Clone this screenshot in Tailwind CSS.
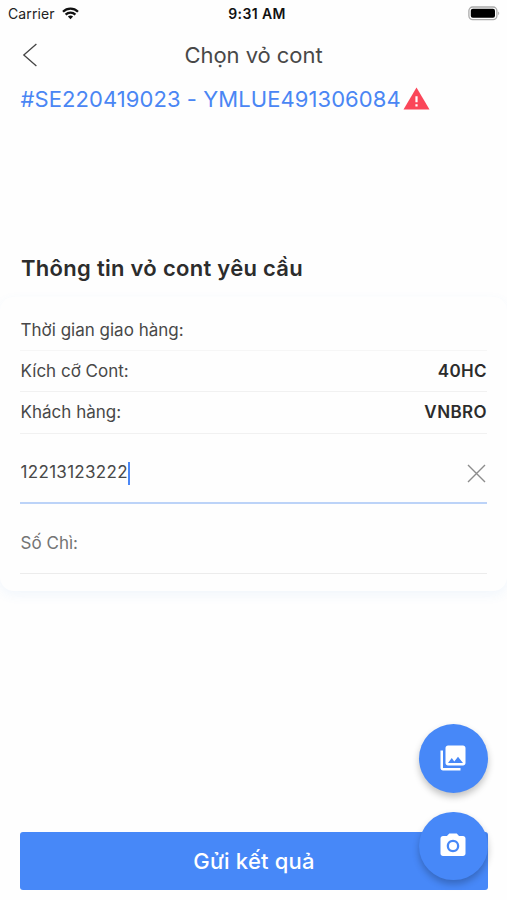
<!DOCTYPE html>
<html lang="vi">
<head>
<meta charset="utf-8">
<meta name="viewport" content="width=device-width, initial-scale=1">
<title>Chọn vỏ cont</title>
<script src="https://cdn.jsdelivr.net/npm/@tailwindcss/browser@4"></script>
</head>
<body class="bg-[#fefefe]">
<div class="relative flex h-[900px] w-[507px] flex-col overflow-hidden bg-[#fefefe] font-['Inter','Noto_Sans',sans-serif] text-[#484848]">
  <!-- Status bar -->
  <header class="grid h-7 shrink-0 grid-cols-3 items-center pr-[7px] pl-2 text-[#111]">
    <div class="flex items-center gap-[7px]">
      <span class="pb-[2px] text-[14px] tracking-[0.1px] text-[#222]">Carrier</span>
      <svg class="mb-[2px] h-[13px] w-[17px]" viewBox="0 0 17 13" fill="none" stroke="#111" stroke-width="2.3"><path d="M1 4.7C5.2.6 11.8.6 16 4.7"/><path d="M3.6 7.7C6.4 5 10.6 5 13.4 7.7"/><path d="M5.9 9.6C7.4 8.2 9.6 8.2 11.1 9.6L8.5 12.3Z" fill="#111" stroke="none"/></svg>
    </div>
    <span class="pb-[2px] pl-[6px] text-center text-[14px] font-semibold tracking-[0.4px] whitespace-nowrap">9:31 AM</span>
    <svg class="mb-[2px] h-[15px] w-[32px] justify-self-end" viewBox="0 0 32 15"><rect x=".9" y="1" width="28" height="12.6" rx="3.8" fill="#fff" stroke="#aaa" stroke-width="1.3"/><rect x="2.8" y="2.8" width="24.2" height="9" rx="2" fill="#000"/><path d="M30.3 5.6c1.2.6 1.2 3 0 3.6z" fill="#999"/></svg>
  </header>

  <!-- Navigation -->
  <nav class="grid h-[54px] shrink-0 grid-cols-[60px_1fr_60px] items-center">
    <svg class="ml-[22px] h-[24px] w-[16px]" viewBox="0 0 16 24" fill="none" stroke="#444" stroke-width="1.3"><path d="M14.4 1 1.8 12l12.6 11"/></svg>
    <h1 class="pt-px text-center text-[22px] tracking-[-0.05px] text-[#484848]">Chọn vỏ cont</h1>
  </nav>

  <div class="flex h-[34px] shrink-0 items-center gap-[2px] pl-[20.5px] text-[#4a86f4]">
    <span class="text-[22px] tracking-[0.07px] whitespace-nowrap">#SE220419023 - YMLUE491306084</span>
    <svg class="mb-px h-[23px] w-[27px]" viewBox="0 0 27 23"><path d="M13.5.4 26.5 22.5H.5Z" fill="#fa4659"/><path d="M12.4 9.2h2.2v6h-2.2zM12.4 17.2h2.2v2.2h-2.2z" fill="#fff"/></svg>
  </div>

  <h2 class="mt-[136px] flex h-8 shrink-0 items-center pl-[21px] text-[22px] font-semibold tracking-[0.29px] text-[#2c2c2c]">Thông tin vỏ cont yêu cầu</h2>

  <!-- Details -->
  <section class="mt-[13px] flex h-[294px] shrink-0 flex-col rounded-[14px] bg-[#fefefe] px-[20px] pt-[13px] text-[17px] shadow-[0_4px_12px_rgba(70,140,220,0.07)]">
    <div class="flex h-[41px] items-center border-b border-[#f6f6f6] pt-[2px] pl-[0.6px]"><span>Thời gian giao hàng:</span></div>
    <div class="flex h-[41px] items-center justify-between border-b border-[#f1f1f1] pt-[2px] pl-[0.6px]"><span>Kích cỡ Cont:</span><strong class="font-semibold tracking-[0.4px] text-[#2c2c2c]">40HC</strong></div>
    <div class="flex h-[42px] items-center justify-between border-b border-[#f1f1f1] pl-[0.6px]"><span>Khách hàng:</span><strong class="font-semibold tracking-[0.4px] text-[#2c2c2c]">VNBRO</strong></div>
    <div class="flex h-[70px] items-center justify-between border-b-2 border-[#bcd3f8] pt-[10px] pl-[0.6px]">
      <div class="flex items-center"><span class="tracking-[0.3px]">12213123222</span><i class="h-[23px] w-[2px] bg-[#4b87f6]"></i></div>
      <svg class="mr-px h-[19px] w-[19px]" viewBox="0 0 19 19" stroke="#8c8c8c" stroke-width="1.4"><path d="m1 1 17 17M18 1 1 18"/></svg>
    </div>
    <div class="flex h-[70px] items-center border-b border-[#ececec] pt-[11px] pl-[0.6px] text-[#747474]"><span>Số Chì:</span></div>
  </section>

  <button class="mr-[19px] ml-[20px] mt-[241px] flex h-[58px] shrink-0 items-center justify-center rounded-[3px] bg-[#4788f8] text-[22px] font-medium tracking-[0.2px] text-white">Gửi kết quả</button>

  <!-- Floating actions -->
  <div class="absolute top-[724px] left-[419px] flex flex-col gap-[19px]">
    <button class="flex size-[68.5px] items-center justify-center rounded-full bg-[#4788f8] shadow-[0_4px_7px_rgba(0,0,0,0.24)]">
      <svg class="size-[30px]" viewBox="0 0 24 24" fill="#fff"><path d="M22 16V4c0-1.1-.9-2-2-2H8c-1.1 0-2 .9-2 2v12c0 1.1.9 2 2 2h12c1.1 0 2-.9 2-2zm-11-4 2.03 2.71L16 11l4 5H8l3-4zM2 6v14c0 1.1.9 2 2 2h14v-2H4V6H2z"/></svg>
    </button>
    <button class="flex size-[68.5px] items-center justify-center rounded-full bg-[#4788f8] shadow-[0_4px_7px_rgba(0,0,0,0.24)]">
      <svg class="size-[30px]" viewBox="0 0 24 24" fill="#fff"><circle cx="12" cy="12" r="3.2"/><path d="M9 2 7.17 4H4c-1.1 0-2 .9-2 2v12c0 1.1.9 2 2 2h16c1.1 0 2-.9 2-2V6c0-1.1-.9-2-2-2h-3.17L15 2H9zm3 15c-2.76 0-5-2.24-5-5s2.24-5 5-5 5 2.24 5 5-2.24 5-5 5z"/></svg>
    </button>
  </div>
</div>
</body>
</html>
